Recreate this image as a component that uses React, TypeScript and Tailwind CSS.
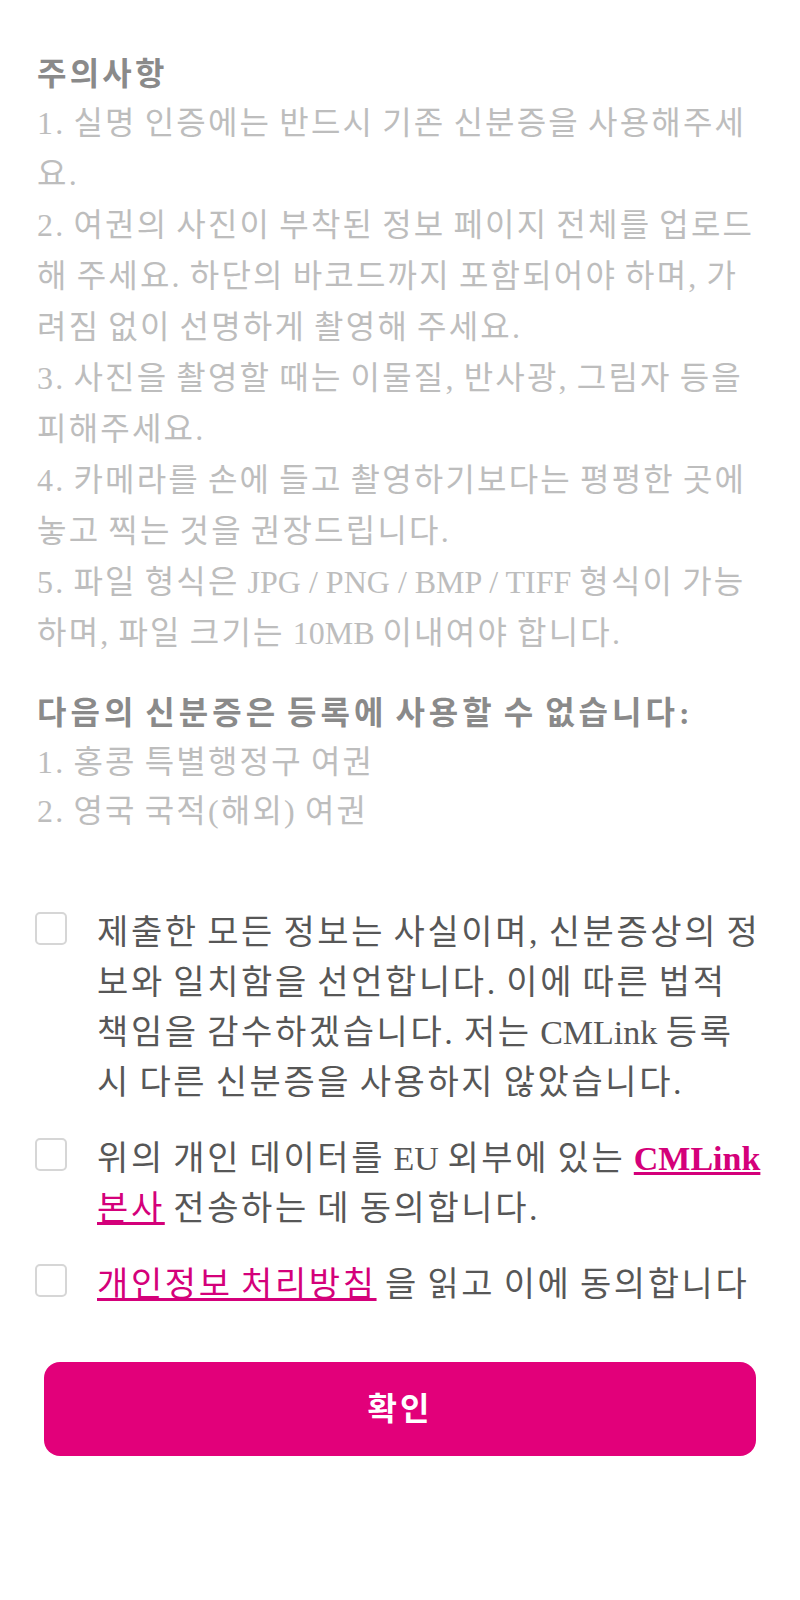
const latin = "tracking-normal [word-spacing:0px]";

export default function App() {
  const notes = [
    "1. 실명 인증에는 반드시 기존 신분증을 사용해주세요.",
    "2. 여권의 사진이 부착된 정보 페이지 전체를 업로드해 주세요. 하단의 바코드까지 포함되어야 하며, 가려짐 없이 선명하게 촬영해 주세요.",
    "3. 사진을 촬영할 때는 이물질, 반사광, 그림자 등을 피해주세요.",
    "4. 카메라를 손에 들고 촬영하기보다는 평평한 곳에 놓고 찍는 것을 권장드립니다.",
  ];

  return (
    <div className="min-h-[1600px] bg-white font-['Liberation_Serif','Noto_Sans_CJK_KR',serif]">
      <div className="px-[37px] pt-[50px] text-[32px]">
        <h2 className="font-bold leading-[48px] tracking-[3.2px] text-[#8a8a8a] [word-spacing:-3.2px]">
          주의사항
        </h2>
        <div className="leading-[51px] tracking-[2.2px] text-[#bdbdbd] [word-spacing:-2.2px]">
          {notes.map((n) => (
            <p key={n}>{n}</p>
          ))}
          <p>
            5. 파일 형식은 <span className={latin}>JPG / PNG / BMP / TIFF</span> 형식이 가능
            <br />
            하며, 파일 크기는 <span className={latin}>10MB</span> 이내여야 합니다.
          </p>
        </div>

        <div className="mt-[30px] leading-[49px]">
          <h2 className="font-bold tracking-[4px] text-[#8a8a8a] [word-spacing:-4px]">
            다음의 신분증은 등록에 사용할 수 없습니다:
          </h2>
          <div className="tracking-[2.2px] text-[#bdbdbd] [word-spacing:-2.2px]">
            <p>1. 홍콩 특별행정구 여권</p>
            <p>2. 영국 국적(해외) 여권</p>
          </div>
        </div>
      </div>

      <div className="mt-[72px] flex flex-col pl-[35px] pr-[37px] text-[34px] leading-[50px] tracking-[2.6px] text-[#575757] [word-spacing:-2.6px]">
        <label className="flex items-start gap-[30px]">
          <span className="mt-[4px] h-[33px] w-[32px] shrink-0 rounded-[5px] border-2 border-[#d6d6d6] bg-white" />
          <span>
            제출한 모든 정보는 사실이며, 신분증상의 정보와 일치함을 선언합니다. 이에 따른 법적
            <br />
            책임을 감수하겠습니다. 저는 <span className={latin}>CMLink</span> 등록
            <br />
            시 다른 신분증을 사용하지 않았습니다.
          </span>
        </label>
        <label className="mt-[26px] flex items-start gap-[30px]">
          <span className="mt-[4px] h-[33px] w-[32px] shrink-0 rounded-[5px] border-2 border-[#d6d6d6] bg-white" />
          <span>
            위의 개인 데이터를 <span className={latin}>EU</span> 외부에 있는{" "}
            <a href="#" className="text-[#d4007a] underline">
              <span className={`font-bold ${latin}`}>CMLink</span> 본사
            </a>{" "}
            전송하는 데 동의합니다.
          </span>
        </label>
        <label className="mt-[26px] flex items-start gap-[30px]">
          <span className="mt-[4px] h-[33px] w-[32px] shrink-0 rounded-[5px] border-2 border-[#d6d6d6] bg-white" />
          <span>
            <a href="#" className="text-[#d4007a] underline">
              개인정보 처리방침
            </a>{" "}
            을 읽고 이에 동의합니다
          </span>
        </label>
      </div>

      <div className="mt-[52px] px-[44px]">
        <button className="flex h-[94px] w-full items-center justify-center rounded-[16px] bg-[#e2007a] text-[32px] font-bold tracking-[3px] text-white">
          확인
        </button>
      </div>
    </div>
  );
}
